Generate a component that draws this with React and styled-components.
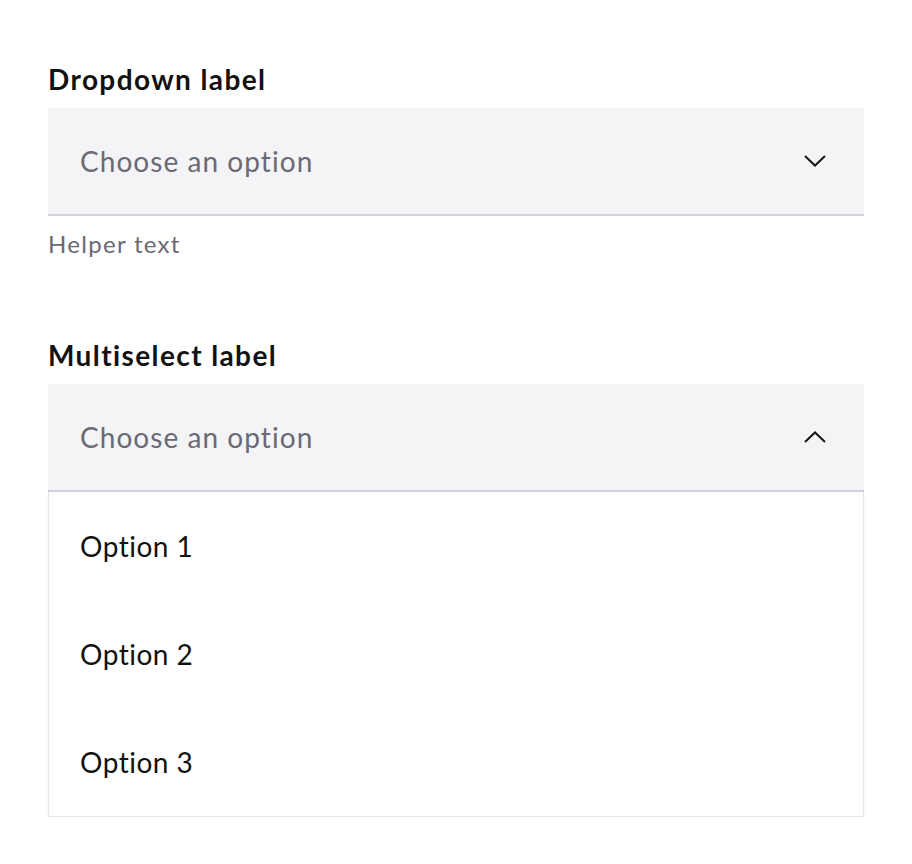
import React from "react";
import styled, { createGlobalStyle } from "styled-components";

const Global = createGlobalStyle`
  html, body { margin: 0; padding: 0; background: #ffffff; }
  body { font-family: "Source Sans Pro", Lato, "Noto Sans", sans-serif; }
`;

const Page = styled.div`
  padding: 58px 48px 0;
  display: flex;
  flex-direction: column;
  gap: 78px;
`;

const Field = styled.div`
  display: flex;
  flex-direction: column;
`;

const Label = styled.div`
  font-size: 28px;
  font-weight: 700;
  color: #121212;
  line-height: 42px;
  margin-bottom: 8px;
  letter-spacing: 1.4px;
`;

const Control = styled.div`
  position: relative;
`;

const Trigger = styled.div`
  height: 106px;
  box-sizing: content-box;
  background: #f4f4f6;
  border-bottom: 2px solid #d2d2e3;
  display: flex;
  align-items: center;
  justify-content: space-between;
  padding: 0 38px 0 32px;
`;

const Placeholder = styled.span`
  font-size: 28px;
  color: #6a6a75;
  letter-spacing: 1.05px;
`;

const Helper = styled.div`
  font-size: 24px;
  color: #6a6a75;
  line-height: 24px;
  margin-top: 16px;
  letter-spacing: 1.3px;
`;

const Menu = styled.ul`
  list-style: none;
  margin: 0;
  padding: 0;
  background: #ffffff;
  border: 1px solid #e4e4ea;
  border-top: none;
  box-shadow: 0 2px 6px rgba(0, 0, 0, 0.06);
`;

const Option = styled.li`
  height: 108px;
  display: flex;
  align-items: center;
  padding: 0 31px;
  font-size: 28px;
  color: #121212;
  letter-spacing: 0.5px;
`;

const Chevron = ({ up }) => (
  <svg width="22" height="12" viewBox="0 0 22 12" fill="none">
    <path
      d={up ? "M1 11 L11 1.5 L21 11" : "M1 1 L11 10.5 L21 1"}
      stroke="#161616"
      strokeWidth="2"
    />
  </svg>
);

export default function App() {
  return (
    <>
      <Global />
      <Page>
        <Field>
          <Label>Dropdown label</Label>
          <Trigger>
            <Placeholder>Choose an option</Placeholder>
            <Chevron />
          </Trigger>
          <Helper>Helper text</Helper>
        </Field>
        <Field>
          <Label>Multiselect label</Label>
          <Control>
            <Trigger>
              <Placeholder>Choose an option</Placeholder>
              <Chevron up />
            </Trigger>
            <Menu>
              <Option>Option 1</Option>
              <Option>Option 2</Option>
              <Option>Option 3</Option>
            </Menu>
          </Control>
        </Field>
      </Page>
    </>
  );
}
